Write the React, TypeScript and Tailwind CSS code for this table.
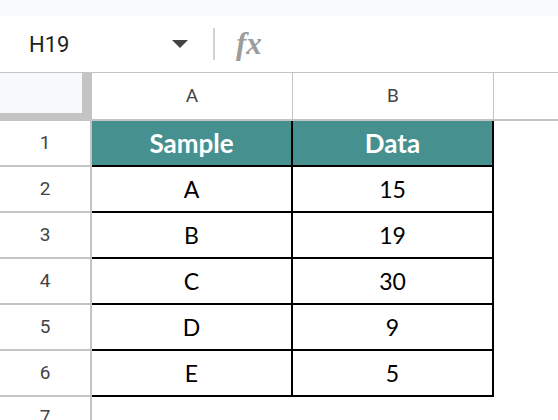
const rows = [
  ["A", "15"],
  ["B", "19"],
  ["C", "30"],
  ["D", "9"],
  ["E", "5"],
];

export default function App() {
  return (
    <div className="w-[558px] h-[420px] overflow-hidden bg-white font-['Roboto','Liberation_Sans',sans-serif]">
      <div className="h-[16px] bg-[#f9fbfd]" />

      {/* name box + formula bar */}
      <div className="h-[57px] flex items-center border-b border-[#c4c4c4]">
        <div className="w-[172px] pl-[29px] text-[22px] text-[#1f1f1f]">H19</div>
        <div className="w-0 h-0 border-l-[8px] border-r-[8px] border-t-[8px] border-l-transparent border-r-transparent border-t-[#444]" />
        <div className="ml-[25px] w-[2px] h-[32px] bg-[#d3d3d3]" />
        <div className="ml-[21px] text-[31px] italic font-bold text-[#9c9c9c] font-['Liberation_Serif',serif] leading-none -mt-[2px]">
          fx
        </div>
      </div>

      {/* column headers */}
      <div className="flex h-[48px]">
        <div className="w-[92px] bg-[#f8f9fa] border-r-[10px] border-b-[8px] border-[#c4c4c4]" />
        <div className="w-[201px] flex items-center justify-center border-r border-b-2 border-[#c4c4c4] text-[19px] text-[#444]">
          A
        </div>
        <div className="w-[201px] flex items-center justify-center border-r border-b-2 border-[#c4c4c4] text-[19px] text-[#444]">
          B
        </div>
        <div className="flex-1 border-b-2 border-[#c4c4c4]" />
      </div>

      {/* header row */}
      <div className="flex h-[46px]">
        <div className="w-[92px] flex items-center justify-center border-r-2 border-b-2 border-[#c4c4c4] text-[19px] text-[#444]">
          1
        </div>
        <div className="w-[201px] flex items-center justify-center bg-[#46918f] border-r-2 border-b-2 border-black text-white font-bold text-[26px] font-['Lato',sans-serif]">
          Sample
        </div>
        <div className="w-[201px] flex items-center justify-center bg-[#46918f] border-r-2 border-b-2 border-black text-white font-bold text-[26px] font-['Lato',sans-serif]">
          Data
        </div>
      </div>

      {rows.map(([sample, data], i) => (
        <div key={sample} className="flex h-[46px]">
          <div className="w-[92px] flex items-center justify-center border-r-2 border-b-2 border-[#c4c4c4] text-[19px] text-[#444]">
            {i + 2}
          </div>
          <div className="w-[201px] flex items-center justify-center border-r-2 border-b-2 border-black text-black text-[23px] font-['Lato',sans-serif]">
            {sample}
          </div>
          <div className="w-[201px] flex items-center justify-center border-r-2 border-b-2 border-black text-black text-[23px] font-['Lato',sans-serif]">
            {data}
          </div>
        </div>
      ))}

      <div className="flex h-[46px]">
        <div className="w-[92px] flex justify-center pt-[6px] border-r-2 border-[#c4c4c4] text-[19px] text-[#444]">
          7
        </div>
      </div>
    </div>
  );
}
